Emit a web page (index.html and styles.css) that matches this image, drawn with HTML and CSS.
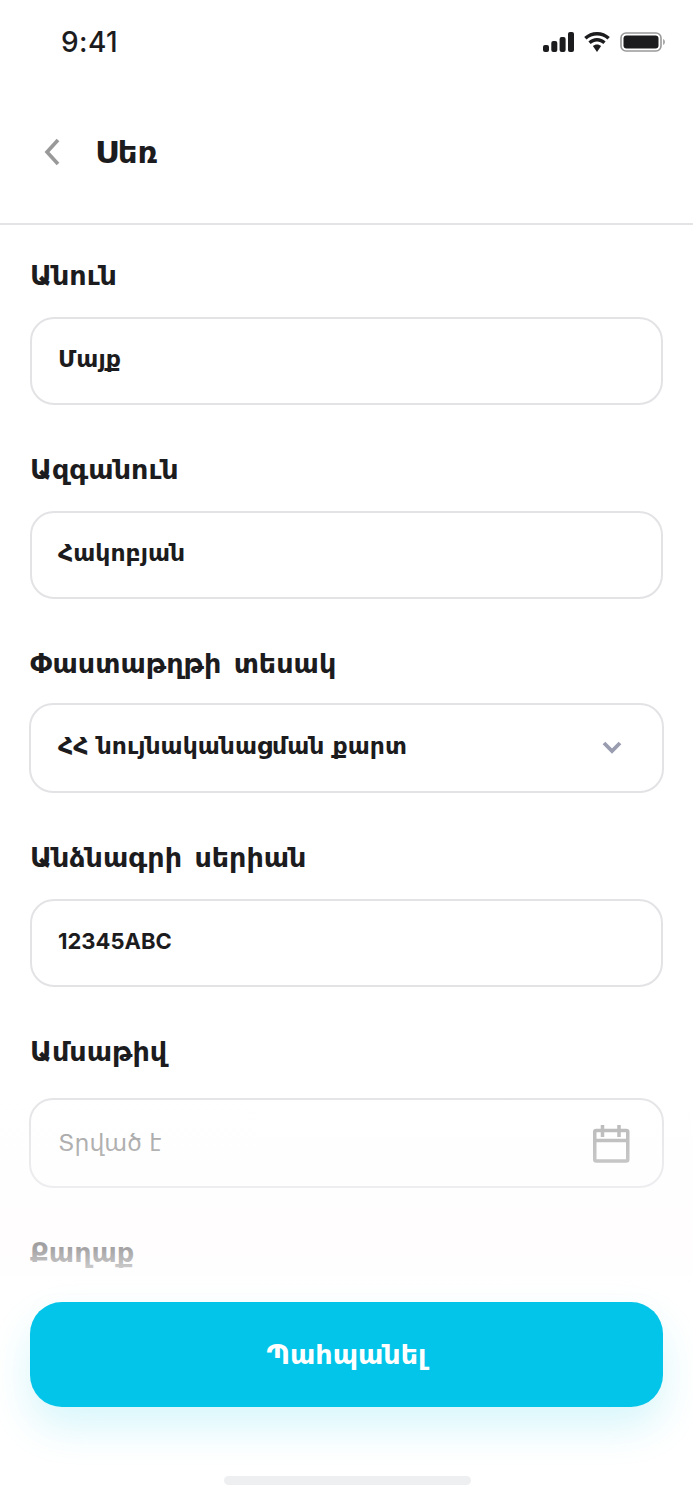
FILE: index.html
```html
<!DOCTYPE html>
<html lang="hy">
<head>
<meta charset="utf-8">
<title>Սեռ</title>
<link rel="stylesheet" href="styles.css">
</head>
<body>
<div class="screen">
  <div class="status">
    <span class="time">9:41</span>
    <div class="status-icons">
      <svg width="31" height="20" viewBox="0 0 31 20"><rect x="0" y="13" width="6" height="7" rx="2"/><rect x="8.300" y="9" width="6" height="11" rx="2"/><rect x="16.600" y="5" width="6" height="15" rx="2"/><rect x="25" y="0" width="6" height="20" rx="2"/></svg>
      <svg width="28" height="20" viewBox="0 0 28 20"><path d="M14 3.400c4 0 7.700 1.500 10.500 4.100l2.300-2.500C23.400 1.900 18.900 0 14 0S4.600 1.900 1.200 5l2.300 2.500C6.300 4.900 10 3.400 14 3.400z"/><path d="M14 9.500c2.400 0 4.600.9 6.300 2.400l2.300-2.500C20.300 7.300 17.300 6 14 6S7.700 7.300 5.400 9.400l2.300 2.500c1.700-1.500 3.900-2.400 6.300-2.400z"/><path d="M14 12.500c-1.600 0-3 .6-4.100 1.500L14 20l4.100-6c-1.100-.9-2.500-1.500-4.100-1.500z"/></svg>
      <svg width="45" height="20" viewBox="0 0 45 20"><rect x="1" y="1" width="40" height="18" rx="5" fill="none" stroke="#999" stroke-width="1.600"/><rect x="3.500" y="3.500" width="35" height="13" rx="3"/><path d="M43 7c1.200.4 2 1.600 2 3s-.8 2.600-2 3z" fill="#aaa"/></svg>
    </div>
  </div>
  <header class="nav">
    <svg class="back" width="18" height="28" viewBox="0 0 18 28"><path d="M15 2 4 14l11 12" fill="none" stroke="#999" stroke-width="3.600"/></svg>
    <h1 class="title">Սեռ</h1>
  </header>
  <main class="form">
    <div class="field">
      <div class="label">Անուն</div>
      <div class="box"><span class="value">Մայք</span></div>
    </div>
    <div class="field">
      <div class="label">Ազգանուն</div>
      <div class="box"><span class="value">Հակոբյան</span></div>
    </div>
    <div class="field">
      <div class="label">Փաստաթղթի տեսակ</div>
      <div class="box box-tall box-select"><span class="value">ՀՀ նույնականացման քարտ</span>
        <svg class="chev" width="20" height="13" viewBox="0 0 20 13"><path d="M2 2l8 8 8-8" fill="none" stroke="#9a9db0" stroke-width="3.800"/></svg>
      </div>
    </div>
    <div class="field">
      <div class="label">Անձնագրի սերիան</div>
      <div class="box"><span class="value value-latin">12345ABC</span></div>
    </div>
    <div class="field field-date">
      <div class="label">Ամսաթիվ</div>
      <div class="box box-tall"><span class="placeholder">Տրված է</span>
        <svg class="cal" width="38" height="38" viewBox="0 0 38 38"><rect x="2.750" y="5.500" width="33" height="30.500" rx="1.500" fill="none" stroke="#b0b0b0" stroke-width="3.500"/><path d="M3 15.500h32M10.500 0v12M27 0v12" fill="none" stroke="#b0b0b0" stroke-width="3.500"/></svg>
      </div>
    </div>
    <div class="field field-city">
      <div class="label">Քաղաք</div>
      <div class="box"></div>
    </div>
  </main>
  <div class="footer">
    <button class="save">Պահպանել</button>
    <div class="home"></div>
  </div>
</div>
</body>
</html>
```
FILE: styles.css
```css
* { box-sizing: border-box; }
html, body { margin: 0; padding: 0; background: #fff; }
.screen {
  position: relative;
  width: 693px;
  height: 1500px;
  overflow: hidden;
  background: #fff;
  color: #1c1c1e;
  font-family: "DejaVu Sans", sans-serif;
}
.status {
  height: 85px;
  padding: 26px 28px 0 61px;
  display: flex;
  justify-content: space-between;
  align-items: flex-start;
}
.time {
  font-family: "Inter", sans-serif;
  font-size: 28px;
  line-height: 32px;
  font-weight: 500;
  letter-spacing: .4px;
}
.status-icons { display: flex; gap: 9px; padding-top: 6px; align-items: center; fill: #1c1c1e; }
.nav {
  height: 140px;
  display: flex;
  align-items: center;
  padding: 0 0 5px 43px;
  gap: 34px;
  border-bottom: 2px solid #e4e4e6;
}
.back { flex: none; }
.title { margin: 0; font-size: 31px; line-height: 36px; font-weight: 700; }
.form { padding: 0 30px; }
.field { padding-top: 31px; height: 194px; }
.field-date { height: 201px; }
.label { font-size: 27px; line-height: 40px; font-weight: 700; word-spacing: 3px; }
.box {
  margin-top: 21px;
  height: 88px;
  padding: 0 26px;
  display: flex;
  align-items: center;
  justify-content: space-between;
  border: 2px solid #e3e3e6;
  border-radius: 24px;
  background: #fff;
}
.box-tall { height: 90px; margin: 19px -1px 0; padding: 0 27px; }
.field-date .box { margin-top: 26px; }
.field-city .box { margin-top: 20px; }
.value { font-size: 23.500px; font-weight: 700; margin-bottom: 5px; }
.value-latin { font-family: "Inter", sans-serif; font-size: 22px; }
.placeholder { font-size: 23.500px; color: #999; margin-bottom: 1px; }
.chev { margin-right: 13px; margin-bottom: 2px; }
.cal { margin-right: 5px; margin-top: 2px; }
.footer {
  position: absolute;
  left: 0;
  right: 0;
  bottom: 0;
  height: 420px;
  padding: 222px 30px 0;
  background: linear-gradient(rgba(255,250,252,0), rgba(255,252,253,.6) 40%, rgba(255,255,255,.96) 50%, #fff);
  display: flex;
  flex-direction: column;
  align-items: center;
}
.save {
  flex: none;
  width: 100%;
  height: 105px;
  border: 0;
  border-radius: 32px;
  background: #03c5e9;
  color: #fff;
  font-family: "DejaVu Sans", sans-serif;
  font-size: 27px;
  font-weight: 700;
  padding-bottom: 2px;
  box-shadow: 0 20px 40px rgba(4,197,233,.16);
}
.home {
  margin: 69px 0 0 2px;
  width: 247px;
  height: 9px;
  border-radius: 5px;
  background: #eeeff0;
}
```
